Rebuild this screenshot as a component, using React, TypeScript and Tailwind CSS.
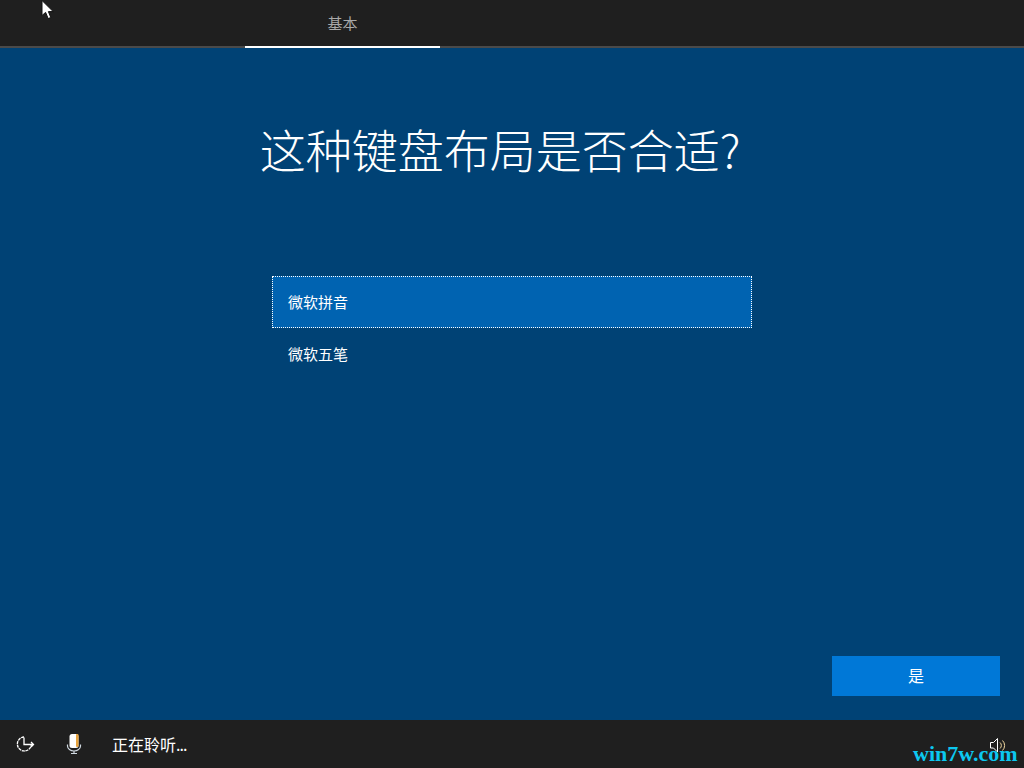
import React from "react";

function Cursor() {
  return (
    <svg className="absolute left-[41px] top-0" width="14" height="20" viewBox="0 0 14 20">
      <path d="M1 0.5V15.5L4.6 12.4L7.2 18.6L9.8 17.5L7.4 11.6H12.2Z" fill="#fff" stroke="#111" strokeWidth="1" />
    </svg>
  );
}

export default function App() {
  return (
    <div className="relative flex h-[768px] w-[1024px] flex-col overflow-hidden bg-[#004275] text-white font-['Noto_Sans_CJK_SC',sans-serif]">
      <header className="flex h-12 shrink-0 border-b-2 border-[#4a4a4a] bg-[#1f1f1f] pl-[245px]">
        <div className="-mb-0.5 flex h-12 w-[195px] items-center justify-center border-b-2 border-white text-[15px] text-[#a8a8a8]">
          基本
        </div>
      </header>
      <main className="flex min-h-0 flex-1 flex-col items-center">
        <h1 className="mt-[67px] h-[73px] pr-6 text-[46px] font-light leading-[66px] text-white">这种键盘布局是否合适?</h1>
        <ul className="mt-[88px] w-[480px] text-[15px]">
          <li className="flex h-[52px] items-center border border-dotted border-white bg-[#0063b1] pl-[15px]">微软拼音</li>
          <li className="flex h-[52px] items-center pl-4">微软五笔</li>
        </ul>
        <div className="mt-auto flex w-full justify-end pb-6 pr-6">
          <button className="h-10 w-[168px] bg-[#0078d7] pb-0.5 text-base text-white">是</button>
        </div>
      </main>
      <footer className="flex h-12 shrink-0 items-center bg-[#1f1f1f] pl-4 text-base">
        <svg width="20" height="20" viewBox="0 0 20 20" fill="none" stroke="#fff" strokeWidth="1.3" strokeDasharray="3 0.7">
          <path d="M8 3A7 7 0 1 0 15.3 11" />
          <path d="M8 3.5V10.5H17.5M15 8L17.5 10.5L15 13" strokeDasharray="none" />
        </svg>
        <svg className="ml-[29px]" width="18" height="22" viewBox="0 0 18 22">
          <rect x="4.5" y="1" width="9" height="14" rx="2.5" fill="#fff" />
          <rect x="11" y="1" width="2.5" height="13" rx="1" fill="#e8a33d" />
          <path d="M2.5 11.5V13a6.5 5 0 0 0 13 0V11.5M9 18V20.5M6 20.5H12" fill="none" stroke="#cfd8e0" strokeWidth="1.2" />
        </svg>
        <span className="ml-[29px] text-base">
          正在聆听<span className="tracking-[-1px]">...</span>
        </span>
      </footer>
      <svg className="absolute left-[989px] top-[737px]" width="18" height="17" viewBox="0 0 18 17" fill="none" stroke="#fff" strokeWidth="1">
        <path d="M1.5 5.5H4.5L8.5 1.5V15L4.5 11H1.5Z" />
        <path d="M11 5.5A4 4 0 0 1 11 11.5M13.5 3.5A7 7 0 0 1 13.5 13.5" stroke="#f2d9a0" />
      </svg>
      <span className="absolute left-[913px] top-[742px] text-[22px] font-bold leading-6 text-[#0cc7f0] font-['Liberation_Serif',serif]">win7w.com</span>
      <Cursor />
    </div>
  );
}
